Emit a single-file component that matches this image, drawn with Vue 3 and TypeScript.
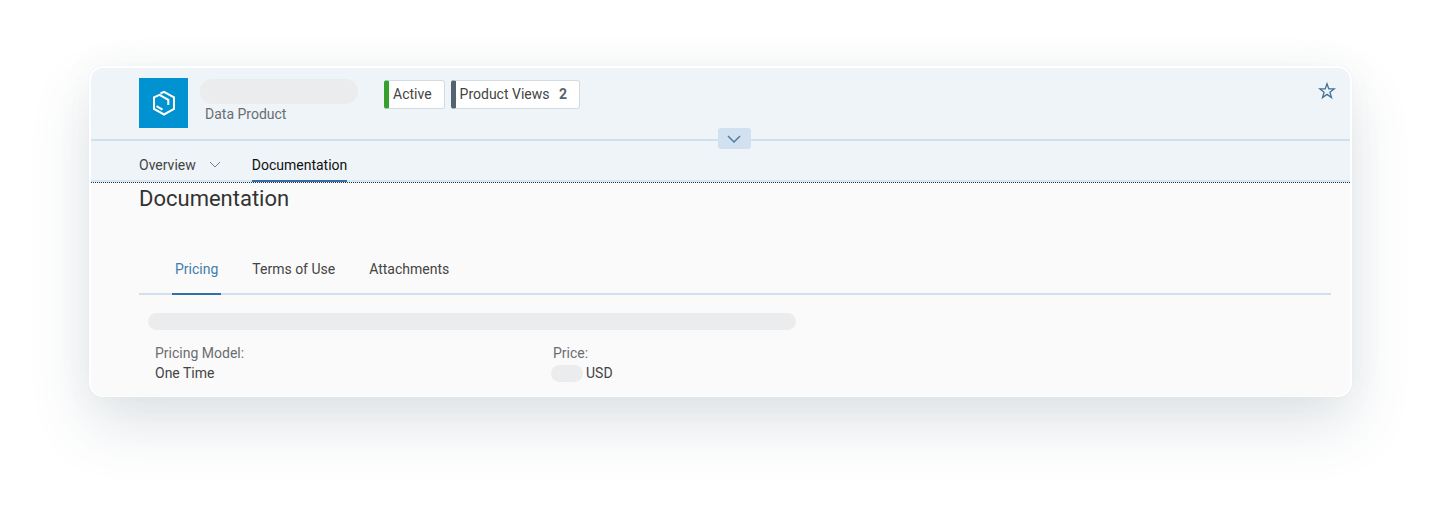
<script setup lang="ts">
import { ref } from 'vue'

const sections = ['Pricing', 'Terms of Use', 'Attachments']
const activeSection = ref('Pricing')
</script>

<template>
  <main class="card">
    <header class="header">
      <div class="avatar">
        <svg viewBox="0 0 24 26" width="24" height="26" fill="none" stroke="#fff" stroke-width="2" aria-hidden="true">
          <path d="M8.500 3.500 12 1.800 22 7.300V19L12 24.500 2 19V7.300L7.500 4.800 16.300 9.800V15" />
          <path d="M4.500 16.200 10.500 19.600" />
        </svg>
      </div>
      <div class="identity">
        <div class="mask mask-title"></div>
        <span class="subtitle">Data Product</span>
      </div>
      <div class="badges">
        <span class="badge badge-active">Active</span>
        <span class="badge badge-views">Product Views <b>2</b></span>
      </div>
      <button class="favorite" type="button" aria-label="Add to favorites">
        <svg viewBox="0 0 18 18" width="18" height="18" fill="none" stroke="#427099" stroke-width="1.300" stroke-linejoin="miter">
          <path d="M9 1.800 10.800 6.900H16.200L11.900 10.200 13.500 15.600 9 12.400 4.500 15.600 6.100 10.200 1.800 6.900H7.200Z" />
        </svg>
      </button>
      <button class="expand" type="button" aria-label="Expand header">
        <svg viewBox="0 0 14 8" width="14" height="8" fill="none" stroke="#4f7da6" stroke-width="1.500">
          <path d="M1 1 7 7 13 1" />
        </svg>
      </button>
    </header>

    <nav class="anchors">
      <button class="anchor" type="button">
        Overview
        <svg viewBox="0 0 12 8" width="12" height="8" fill="none" stroke="#66809a" stroke-width="1">
          <path d="M1 1 6 6 11 1" />
        </svg>
      </button>
      <button class="anchor anchor-current" type="button">Documentation</button>
    </nav>

    <section class="content">
      <h1>Documentation</h1>
      <div class="tabs" role="tablist">
        <button
          v-for="name in sections"
          :key="name"
          class="tab"
          :class="{ 'tab-selected': name === activeSection }"
          type="button"
          role="tab"
          :aria-selected="name === activeSection"
          @click="activeSection = name"
        >{{ name }}</button>
      </div>
      <div class="mask mask-line"></div>
      <dl class="facts">
        <div>
          <dt>Pricing Model:</dt>
          <dd>One Time</dd>
        </div>
        <div>
          <dt>Price:</dt>
          <dd class="price"><span class="mask mask-price"></span>USD</dd>
        </div>
      </dl>
    </section>
  </main>
</template>

<style>
body {
  margin: 0;
  background: #fff;
}
</style>

<style scoped>
.card {
  margin: 66px 89px 110px;
  border: 2px solid #fff;
  border-bottom-width: 1px;
  border-radius: 14px;
  background: #fafafa;
  box-shadow: 0 0 1px #dbe5ed, 0 28px 60px rgba(62, 90, 105, 0.16), 0 0 40px rgba(62, 90, 105, 0.04);
  font-family: Roboto, "Liberation Sans", sans-serif;
  font-size: 14px;
  line-height: 20px;
  color: #444;
}

button {
  padding: 0;
  border: 0;
  background: none;
  font: inherit;
  color: inherit;
  cursor: pointer;
}

svg {
  display: block;
}

.header {
  position: relative;
  display: flex;
  align-items: flex-start;
  height: 61px;
  padding: 10px 14px 0 48px;
  border-bottom: 2px solid #d1e0ee;
  border-radius: 12px 12px 0 0;
  background: #eef4f8;
}

.avatar {
  display: grid;
  place-items: center;
  width: 49px;
  height: 50px;
  background: #0092d1;
}

.mask {
  background: #ebeced;
}

.identity {
  display: flex;
  flex-direction: column;
  margin-left: 12px;
  padding-top: 1px;
}

.mask-title {
  width: 158px;
  height: 25px;
  border-radius: 13px;
}

.subtitle {
  padding-left: 5px;
  color: #6a6d70;
}

.badges {
  display: flex;
  gap: 6px;
  margin: 2px auto 0 26px;
}

.badge {
  padding: 3px 12px 4px 4px;
  border: 1px solid #d3dbe1;
  border-left-width: 5px;
  border-radius: 3px;
  background: #fff;
}

.badge b {
  margin-left: 6px;
  color: #55636d;
}

.badge-active {
  border-left-color: #36a02e;
}

.badge-views {
  border-left-color: #55636d;
}

.favorite {
  margin-top: 4px;
}

.expand {
  position: absolute;
  bottom: -10px;
  left: calc(50% - 3px);
  display: grid;
  place-items: center;
  width: 33px;
  height: 21px;
  border-radius: 3px;
  background: #d1e1ef;
}

.anchors {
  display: flex;
  gap: 31px;
  padding-left: 48px;
  border-bottom: 1px dotted #333;
  background: #eef4f8;
  box-shadow: inset 0 -2px #d6e6f3;
}

.anchor {
  display: flex;
  align-items: center;
  gap: 13px;
  padding: 14px 0 5px;
  border-bottom: 2px solid transparent;
}

.anchor-current {
  border-color: #346fa8;
  color: #111;
}

.content {
  padding: 2px 19px 13px 48px;
}

h1 {
  margin: 0;
  font-size: 22px;
  font-weight: 400;
  line-height: 28px;
  color: #333;
}

.tabs {
  display: flex;
  gap: 28px;
  margin-top: 46px;
  padding-left: 33px;
  box-shadow: inset 0 -2px #d1e1ef;
}

.tab {
  padding: 0 3px 14px;
  border-bottom: 2px solid transparent;
}

.tab-selected {
  border-color: #346fa8;
  color: #427cac;
}

.mask-line {
  width: 54.4%;
  height: 17px;
  margin: 18px 0 13px 9px;
  border-radius: 9px;
}

.facts {
  display: grid;
  grid-template-columns: 1fr 2fr;
  margin: 0;
  padding-left: 16px;
}

.facts > div + div {
  margin-left: 6px;
}

dt {
  color: #6a6d70;
}

dd {
  margin: 0;
}

.price {
  display: flex;
  align-items: center;
  gap: 3px;
  margin-left: -2px;
}

.mask-price {
  width: 32px;
  height: 17px;
  border-radius: 9px;
}
</style>
